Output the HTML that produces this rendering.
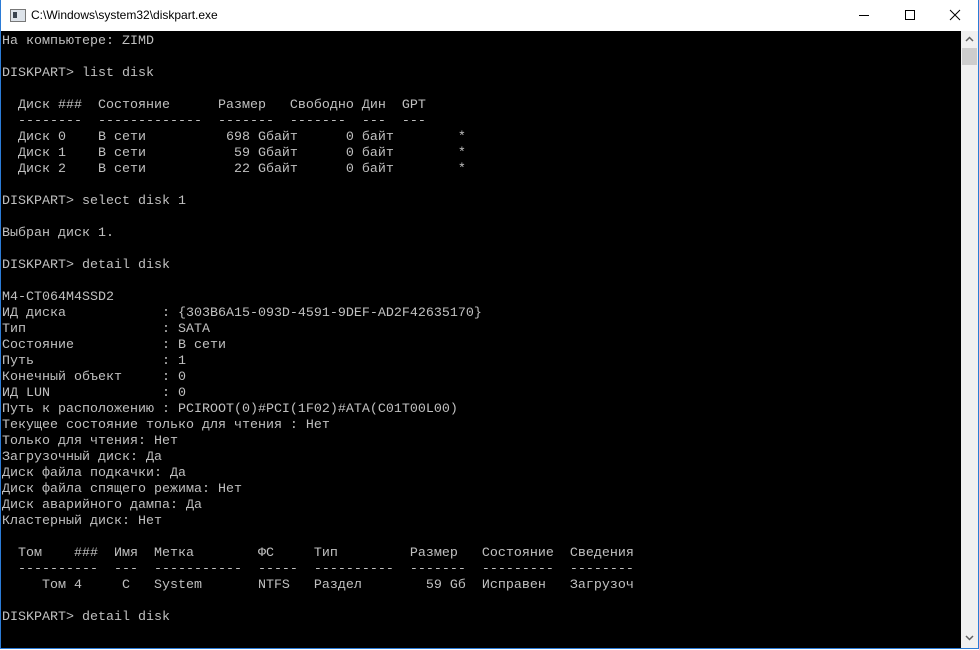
<!DOCTYPE html>
<html><head><meta charset="utf-8"><style>
html,body{margin:0;padding:0;width:979px;height:650px;overflow:hidden;background:#fff}
#win{position:absolute;left:0;top:0;width:977px;height:648px;border:1px solid #2b7bd6;border-top:none;background:#000}
#title{position:absolute;left:0;top:0;width:977px;height:31px;background:#fff;font-family:"Liberation Sans",sans-serif;font-size:12px;color:#000}
#title .t{position:absolute;left:30px;top:8px}
#icon{position:absolute;left:9px;top:9px;width:14px;height:11px;border:1px solid #777;background:#dde3ea}
#icon:after{content:"";position:absolute;left:2px;top:2px;width:4px;height:6px;background:#39434f}
.btn{position:absolute;top:0;width:46px;height:31px}
#term{position:absolute;left:1px;top:34px;margin:0;font-family:"Liberation Mono","DejaVu Sans Mono",monospace;font-size:13.33px;line-height:16px;color:#c0c0c0;white-space:pre}
#sb{position:absolute;left:960px;top:31px;width:17px;height:617px;background:#f0f0f0}
#thumb{position:absolute;left:1px;top:17px;width:15px;height:17px;background:#cdcdcd}
</style></head><body>
<div id="win">
<div id="title"><div id="icon"></div><span class="t">C:\Windows\system32\diskpart.exe</span>
<svg class="btn" style="left:840px" viewBox="0 0 46 31"><path d="M18 15.5h10" stroke="#000" stroke-width="1"/></svg>
<svg class="btn" style="left:886px" viewBox="0 0 46 31"><rect x="18.5" y="10.5" width="9" height="9" fill="none" stroke="#000"/></svg>
<svg class="btn" style="left:931px" viewBox="0 0 46 31"><path d="M18 10l10 10M28 10l-10 10" stroke="#000" stroke-width="1"/></svg>
</div>
<pre id="term">На компьютере: ZIMD

DISKPART&gt; list disk

  Диск ###  Состояние      Размер   Свободно Дин  GPT
  --------  -------------  -------  -------  ---  ---
  Диск 0    В сети          698 Gбайт      0 байт        *
  Диск 1    В сети           59 Gбайт      0 байт        *
  Диск 2    В сети           22 Gбайт      0 байт        *

DISKPART&gt; select disk 1

Выбран диск 1.

DISKPART&gt; detail disk

M4-CT064M4SSD2
ИД диска            : {303B6A15-093D-4591-9DEF-AD2F42635170}
Тип                 : SATA
Состояние           : В сети
Путь                : 1
Конечный объект     : 0
ИД LUN              : 0
Путь к расположению : PCIROOT(0)#PCI(1F02)#ATA(C01T00L00)
Текущее состояние только для чтения : Нет
Только для чтения: Нет
Загрузочный диск: Да
Диск файла подкачки: Да
Диск файла спящего режима: Нет
Диск аварийного дампа: Да
Кластерный диск: Нет

  Том    ###  Имя  Метка        ФС     Тип         Размер   Состояние  Сведения
  ----------  ---  -----------  -----  ----------  -------  ---------  --------
     Том 4     C   System       NTFS   Раздел        59 Gб  Исправен   Загрузоч

DISKPART&gt; detail disk</pre>
<div id="sb"><div id="thumb"></div>
<svg style="position:absolute;left:4px;top:5px" width="9" height="6" viewBox="0 0 9 6"><path d="M1 5l3.5-3.5L8 5" fill="none" stroke="#606060" stroke-width="1.5"/></svg>
<svg style="position:absolute;left:4px;top:604px" width="9" height="6" viewBox="0 0 9 6"><path d="M1 1l3.5 3.5L8 1" fill="none" stroke="#606060" stroke-width="1.5"/></svg>
</div>
</div>
</body></html>
